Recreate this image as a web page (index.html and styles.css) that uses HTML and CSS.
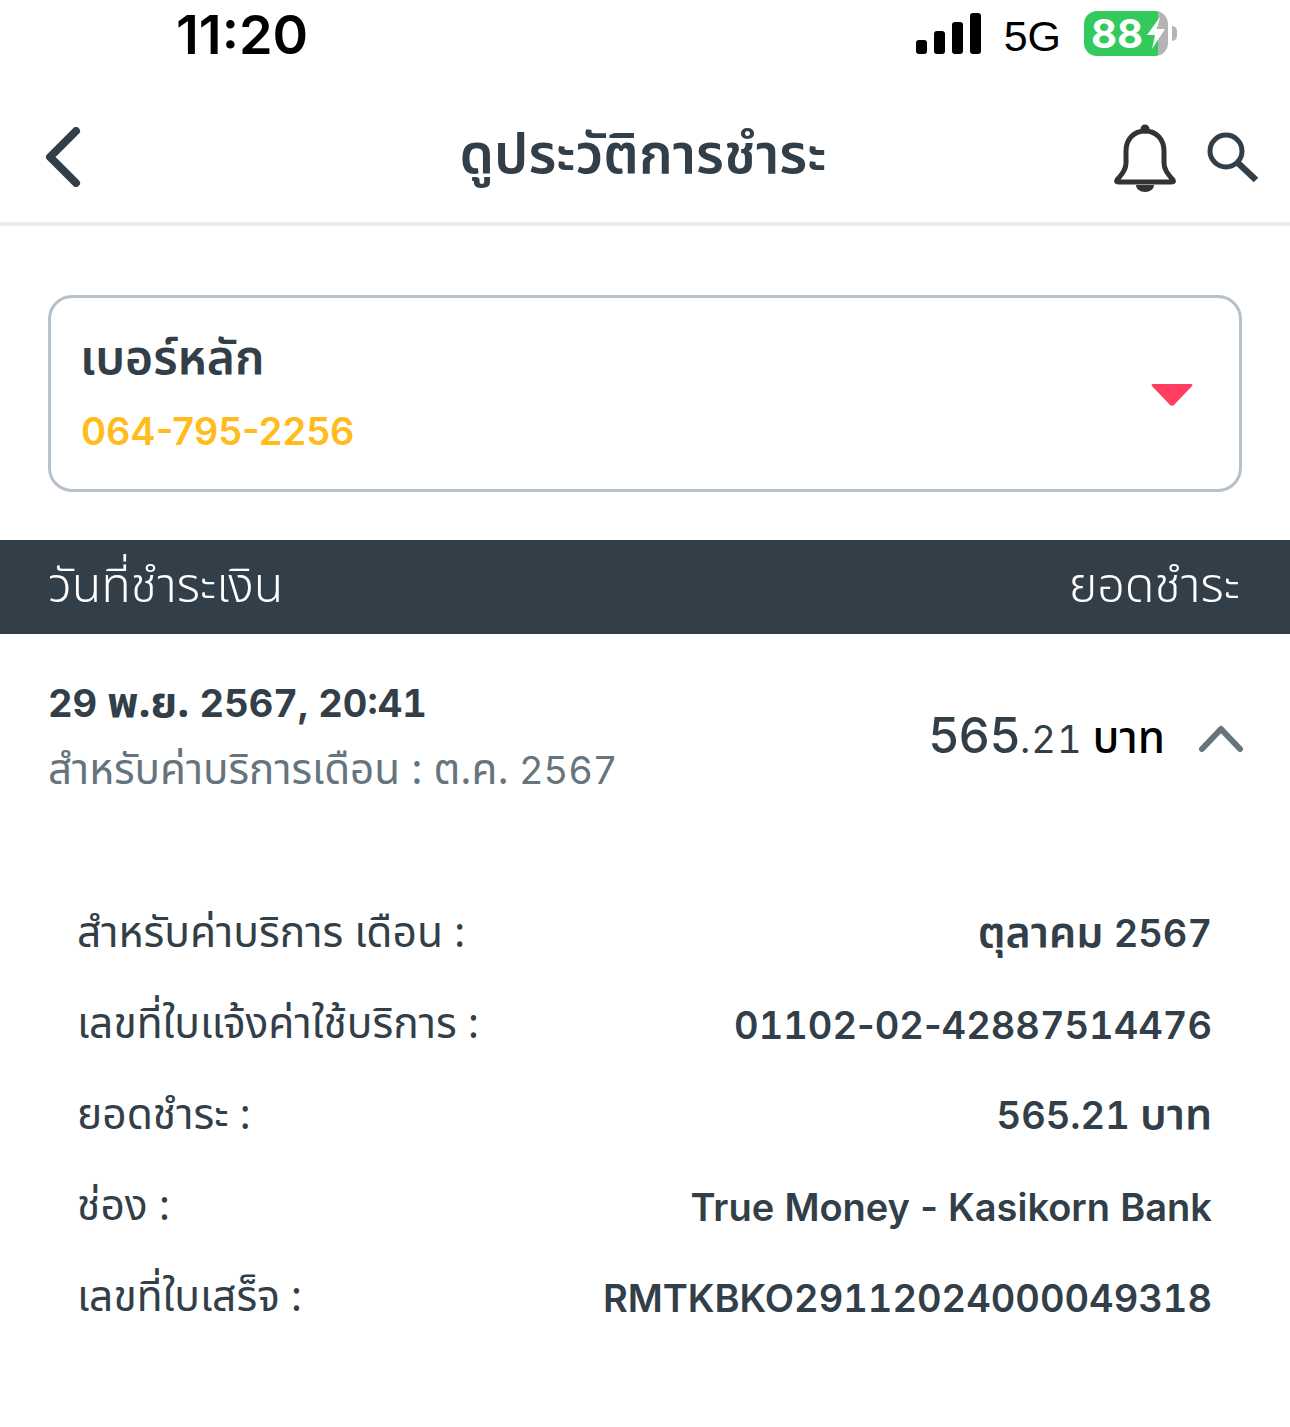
FILE: index.html
```html
<!DOCTYPE html>
<html lang="th">
<head>
<meta charset="utf-8">
<title>ดูประวัติการชำระ</title>
<link rel="stylesheet" href="styles.css">
</head>
<body>
<div class="status">
  <span class="time">11:20</span>
  <div class="status-right">
    <svg class="signal" width="66" height="42" viewBox="0 0 66 42"><rect x="0" y="27" width="11" height="14" rx="3"/><rect x="18" y="18" width="11" height="23" rx="3"/><rect x="36" y="9" width="11" height="32" rx="3"/><rect x="54" y="0" width="11" height="41" rx="3"/></svg>
    <span class="net">5G</span>
    <div class="battery"><span class="bat-text">88</span>
      <svg class="bolt" width="18" height="32" viewBox="0 0 18 32"><path d="M13 0 0 18h8L5 32 18 12h-8z" fill="#fff"/></svg>
    </div>
    <span class="bat-cap"></span>
  </div>
</div>
<header class="nav">
  <svg class="back" width="36" height="60" viewBox="0 0 36 60"><path d="M31 4 5 30l26 26" fill="none" stroke="#323e48" stroke-width="8" stroke-linecap="round" stroke-linejoin="round"/></svg>
  <h1 class="title">ดูประวัติการชำระ</h1>
  <div class="nav-icons">
    <svg class="bell" width="62" height="68" viewBox="0 0 62 68"><circle cx="31" cy="5" r="4.500" fill="#333"/><path d="M31 7C20 7 12 15 12 27v12c0 6-3 10-9 17-1 2 0 2 2 2h52c2 0 3 0 2-2-6-7-9-11-9-17V27C50 15 42 7 31 7z" fill="none" stroke="#333" stroke-width="5" stroke-linejoin="round"/><path d="M22 61h18c0 4-4 7-9 7s-9-3-9-7z" fill="#333"/></svg>
    <svg width="52" height="52" viewBox="0 0 52 52"><circle cx="20" cy="20" r="16" fill="none" stroke="#323e48" stroke-width="5"/><path d="M32 32 50 49" stroke="#323e48" stroke-width="6.500" fill="none"/></svg>
  </div>
</header>
<section class="picker">
  <div class="picker-text">
    <div class="picker-label">เบอร์หลัก</div>
    <div class="picker-num">064-795-2256</div>
  </div>
  <svg class="caret" width="42" height="24" viewBox="0 0 42 24"><path d="M2 1h38c1.500 0 2 1 1 2L23 22c-1 1-3 1-4 0L1 3C0 2 .5 1 2 1z" fill="#ff3e62"/></svg>
</section>
<div class="table-head"><span>วันที่ชำระเงิน</span><span>ยอดชำระ</span></div>
<div class="summary">
  <div>
    <div class="sum-date">29 <span class="th">พ.ย.</span> 2567, 20:41</div>
    <div class="sum-sub"><span class="th">สำหรับค่าบริการเดือน : ต.ค.</span> 2567</div>
  </div>
  <div class="sum-right">
    <span class="amt">565</span><span class="amt-sm">.21</span><span class="baht">บาท</span>
    <svg class="chev" width="46" height="28" viewBox="0 0 46 28"><path d="M4 24 23 4l19 20" fill="none" stroke="#66747e" stroke-width="6" stroke-linecap="round" stroke-linejoin="round"/></svg>
  </div>
</div>
<dl class="details">
  <div class="row"><dt>สำหรับค่าบริการ เดือน :</dt><dd><span class="th">ตุลาคม</span> 2567</dd></div>
  <div class="row"><dt>เลขที่ใบแจ้งค่าใช้บริการ :</dt><dd>01102<span class="hy">-</span>02<span class="hy">-</span>42887514476</dd></div>
  <div class="row"><dt>ยอดชำระ :</dt><dd>565.21 <span class="th">บาท</span></dd></div>
  <div class="row"><dt>ช่อง :</dt><dd>True Money <span class="hy">-</span> Kasikorn Bank</dd></div>
  <div class="row"><dt>เลขที่ใบเสร็จ :</dt><dd>RMTKBKO29112024000049318</dd></div>
</dl>
</body>
</html>
```
FILE: styles.css
```css
* { box-sizing: border-box; }
html, body { margin: 0; padding: 0; background: #fff; }
body { width: 1290px; height: 1427px; overflow: hidden; color: #323e48; font-family: "Noto Sans", "Noto Sans Thai", sans-serif; }
.status { height: 96px; display: flex; justify-content: space-between; padding: 0 113px 0 176px; }
.time { font-family: Inter, "Liberation Sans", sans-serif; font-size: 54px; font-weight: 600; color: #000; line-height: 70px; }
.status-right { display: flex; align-items: flex-start; padding-top: 13px; }
.net { font-family: "Liberation Sans", sans-serif; font-size: 43px; color: #000; line-height: 46px; margin-left: 22px; }
.battery { position: relative; width: 84px; height: 45px; margin-left: 23px; margin-top: -2px; border-radius: 13px; background: linear-gradient(90deg, #34c95c 0 88%, #b3b3b3 88%); }
.bat-text { font-family: Inter, sans-serif; font-weight: 700; font-size: 40px; line-height: 45px; color: #fff; padding-left: 7px; display: block; }
.bolt { position: absolute; left: 63px; top: 6px; }
.bat-cap { width: 5px; height: 15px; margin-top: 13px; margin-left: 4px; border-radius: 0 7px 7px 0; background: #b3b3b3; }
.nav { height: 130px; display: flex; align-items: center; justify-content: space-between; border-bottom: 4px solid #ececec; padding: 0 32px 5px 45px; position: relative; }
.title { margin: 0; position: absolute; left: 0; right: 4px; text-align: center; font-size: 55px; font-weight: 600; line-height: 70px; top: 21px; }
.nav-icons { display: flex; align-items: center; gap: 30px; }
.bell { margin-top: 2px; }
.picker { margin: 69px 48px 48px; height: 197px; border: 3px solid #b7c1ca; border-radius: 24px; display: flex; align-items: center; justify-content: space-between; padding: 0 46px 0 30px; }
.caret { margin-top: 2px; }
.picker-label { font-size: 48px; font-weight: 600; line-height: 60px; margin: -6px 0 20px -1px; }
.picker-num { font-family: Inter, sans-serif; font-size: 38px; font-weight: 600; color: #ffbc1c; line-height: 50px; }
.table-head { height: 94px; background: #323e48; color: #fff; display: flex; justify-content: space-between; align-items: center; padding: 0 50px 0 48px; font-size: 48.500px; font-weight: 350; }
.summary { display: flex; justify-content: space-between; align-items: flex-start; padding: 41px 46px 0 48px; height: 242px; }
.sum-date, .sum-sub, .amt, .amt-sm, .row dd { font-family: Inter, "Noto Sans Thai", sans-serif; }
.sum-date, .sum-sub, .amt-sm, .row dd { font-variant-numeric: tabular-nums; }
.hy { font-variant-numeric: normal; }
.sum-date { font-size: 38px; font-weight: 700; line-height: 52px; }
.sum-sub { font-size: 38px; color: #66747e; line-height: 52px; margin-top: 13px; }
.th { font-family: "Noto Sans", "Noto Sans Thai", sans-serif; font-size: 1.13em; }
.sum-sub .th { font-size: 1.11em; }
.sum-right { display: flex; align-items: baseline; margin-top: 26px; }
.amt { font-size: 49px; line-height: 70px; font-weight: 500; }
.amt-sm { font-size: 38px; letter-spacing: 1px; }
.baht { font-size: 44px; color: #000; margin-left: 10px; font-weight: 500; }
.chev { margin: 0 0 2px 33px; }
.details { margin: 0; padding: 12px 78px 0 77px; }
.row { display: flex; justify-content: space-between; align-items: center; height: 91px; }
.row dt { font-size: 42.500px; }
.row dd { margin: 0; font-size: 38px; font-weight: 600; }
```
